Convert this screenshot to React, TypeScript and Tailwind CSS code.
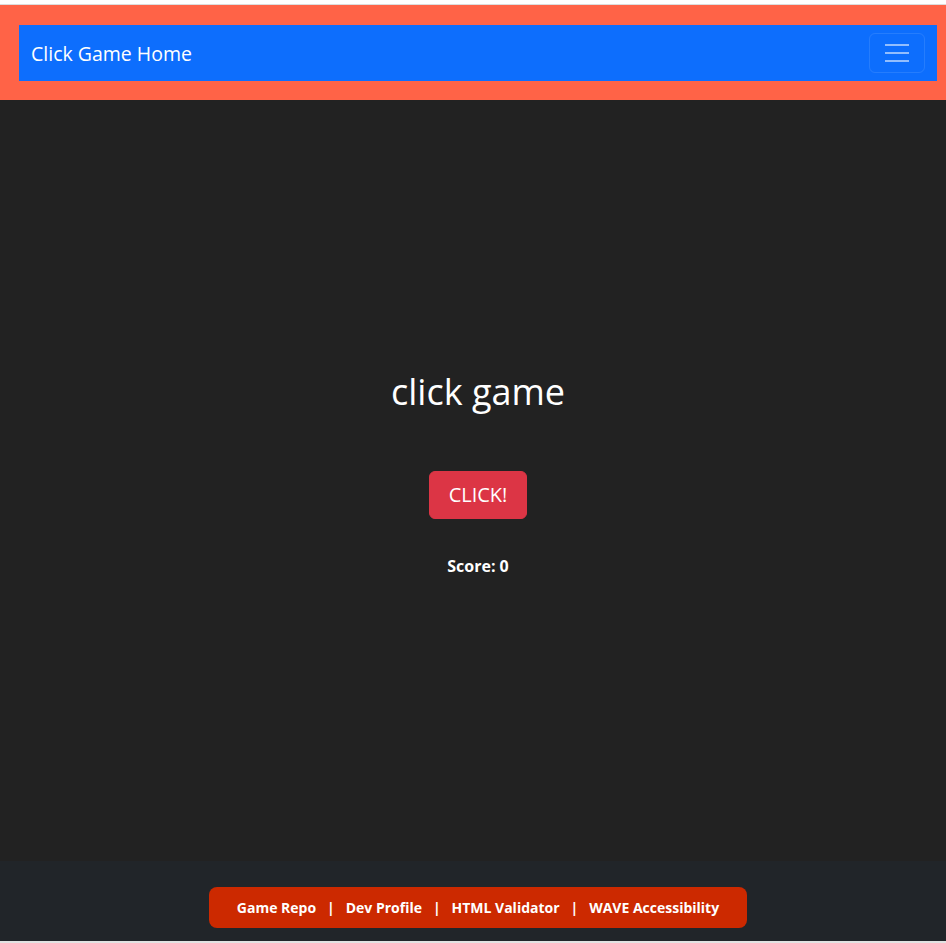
import React, { useState } from "react";

export default function App() {
  const [score, setScore] = useState(0);
  const font = { fontFamily: '"Open Sans", "Noto Sans", sans-serif' };
  return (
    <div className="w-[946px] bg-white" style={font}>
      <div className="h-[4px] bg-white" />
      <div className="h-[1px] bg-[#dcdcdc]" />
      <div className="bg-[#ff6347] pl-[19px] pr-[9px] pt-[20px] pb-[19px]">
        <nav className="h-[56px] bg-[#0d6efd] flex items-center justify-between pl-[12px] pr-[12px]">
          <span className="text-white text-[19.5px] leading-[30px] pt-[2px]">Click Game Home</span>
          <button className="w-[56px] h-[40px] rounded-[6px] border border-white/10 flex flex-col items-center justify-center gap-[6px]">
            <span className="block w-[24px] h-[2px] bg-white/55" />
            <span className="block w-[24px] h-[2px] bg-white/55" />
            <span className="block w-[24px] h-[2px] bg-white/55" />
          </button>
        </nav>
      </div>
      <main className="h-[761px] bg-[#222222] flex flex-col items-center justify-center pb-[13px] pl-[10px]">
        <h1 className="text-white text-[36px] leading-[43px]">click game</h1>
        <button
          onClick={() => setScore(score + 1)}
          className="mt-[58px] h-[48px] w-[98px] rounded-[6px] bg-[#dc3545] border border-[#dc3545] text-white text-[20px] leading-[30px]"
        >
          CLICK!
        </button>
        <p className="mt-[35px] text-white font-bold text-[16px] leading-[24px]">Score: {score}</p>
      </main>
      <footer className="h-[80px] bg-[#212529] flex justify-center pt-[26px] pl-[10px]">
        <div className="h-[41px] rounded-[8px] bg-[#cc2900] px-[28px] flex items-center text-white font-bold text-[14px] whitespace-pre">
          <span>Game Repo</span>
          <span>{"   |   "}</span>
          <span>Dev Profile</span>
          <span>{"   |   "}</span>
          <span>HTML Validator</span>
          <span>{"   |   "}</span>
          <span>WAVE Accessibility</span>
        </div>
      </footer>
      <div className="h-[2px] bg-[#e2e2e2]" />
    </div>
  );
}
